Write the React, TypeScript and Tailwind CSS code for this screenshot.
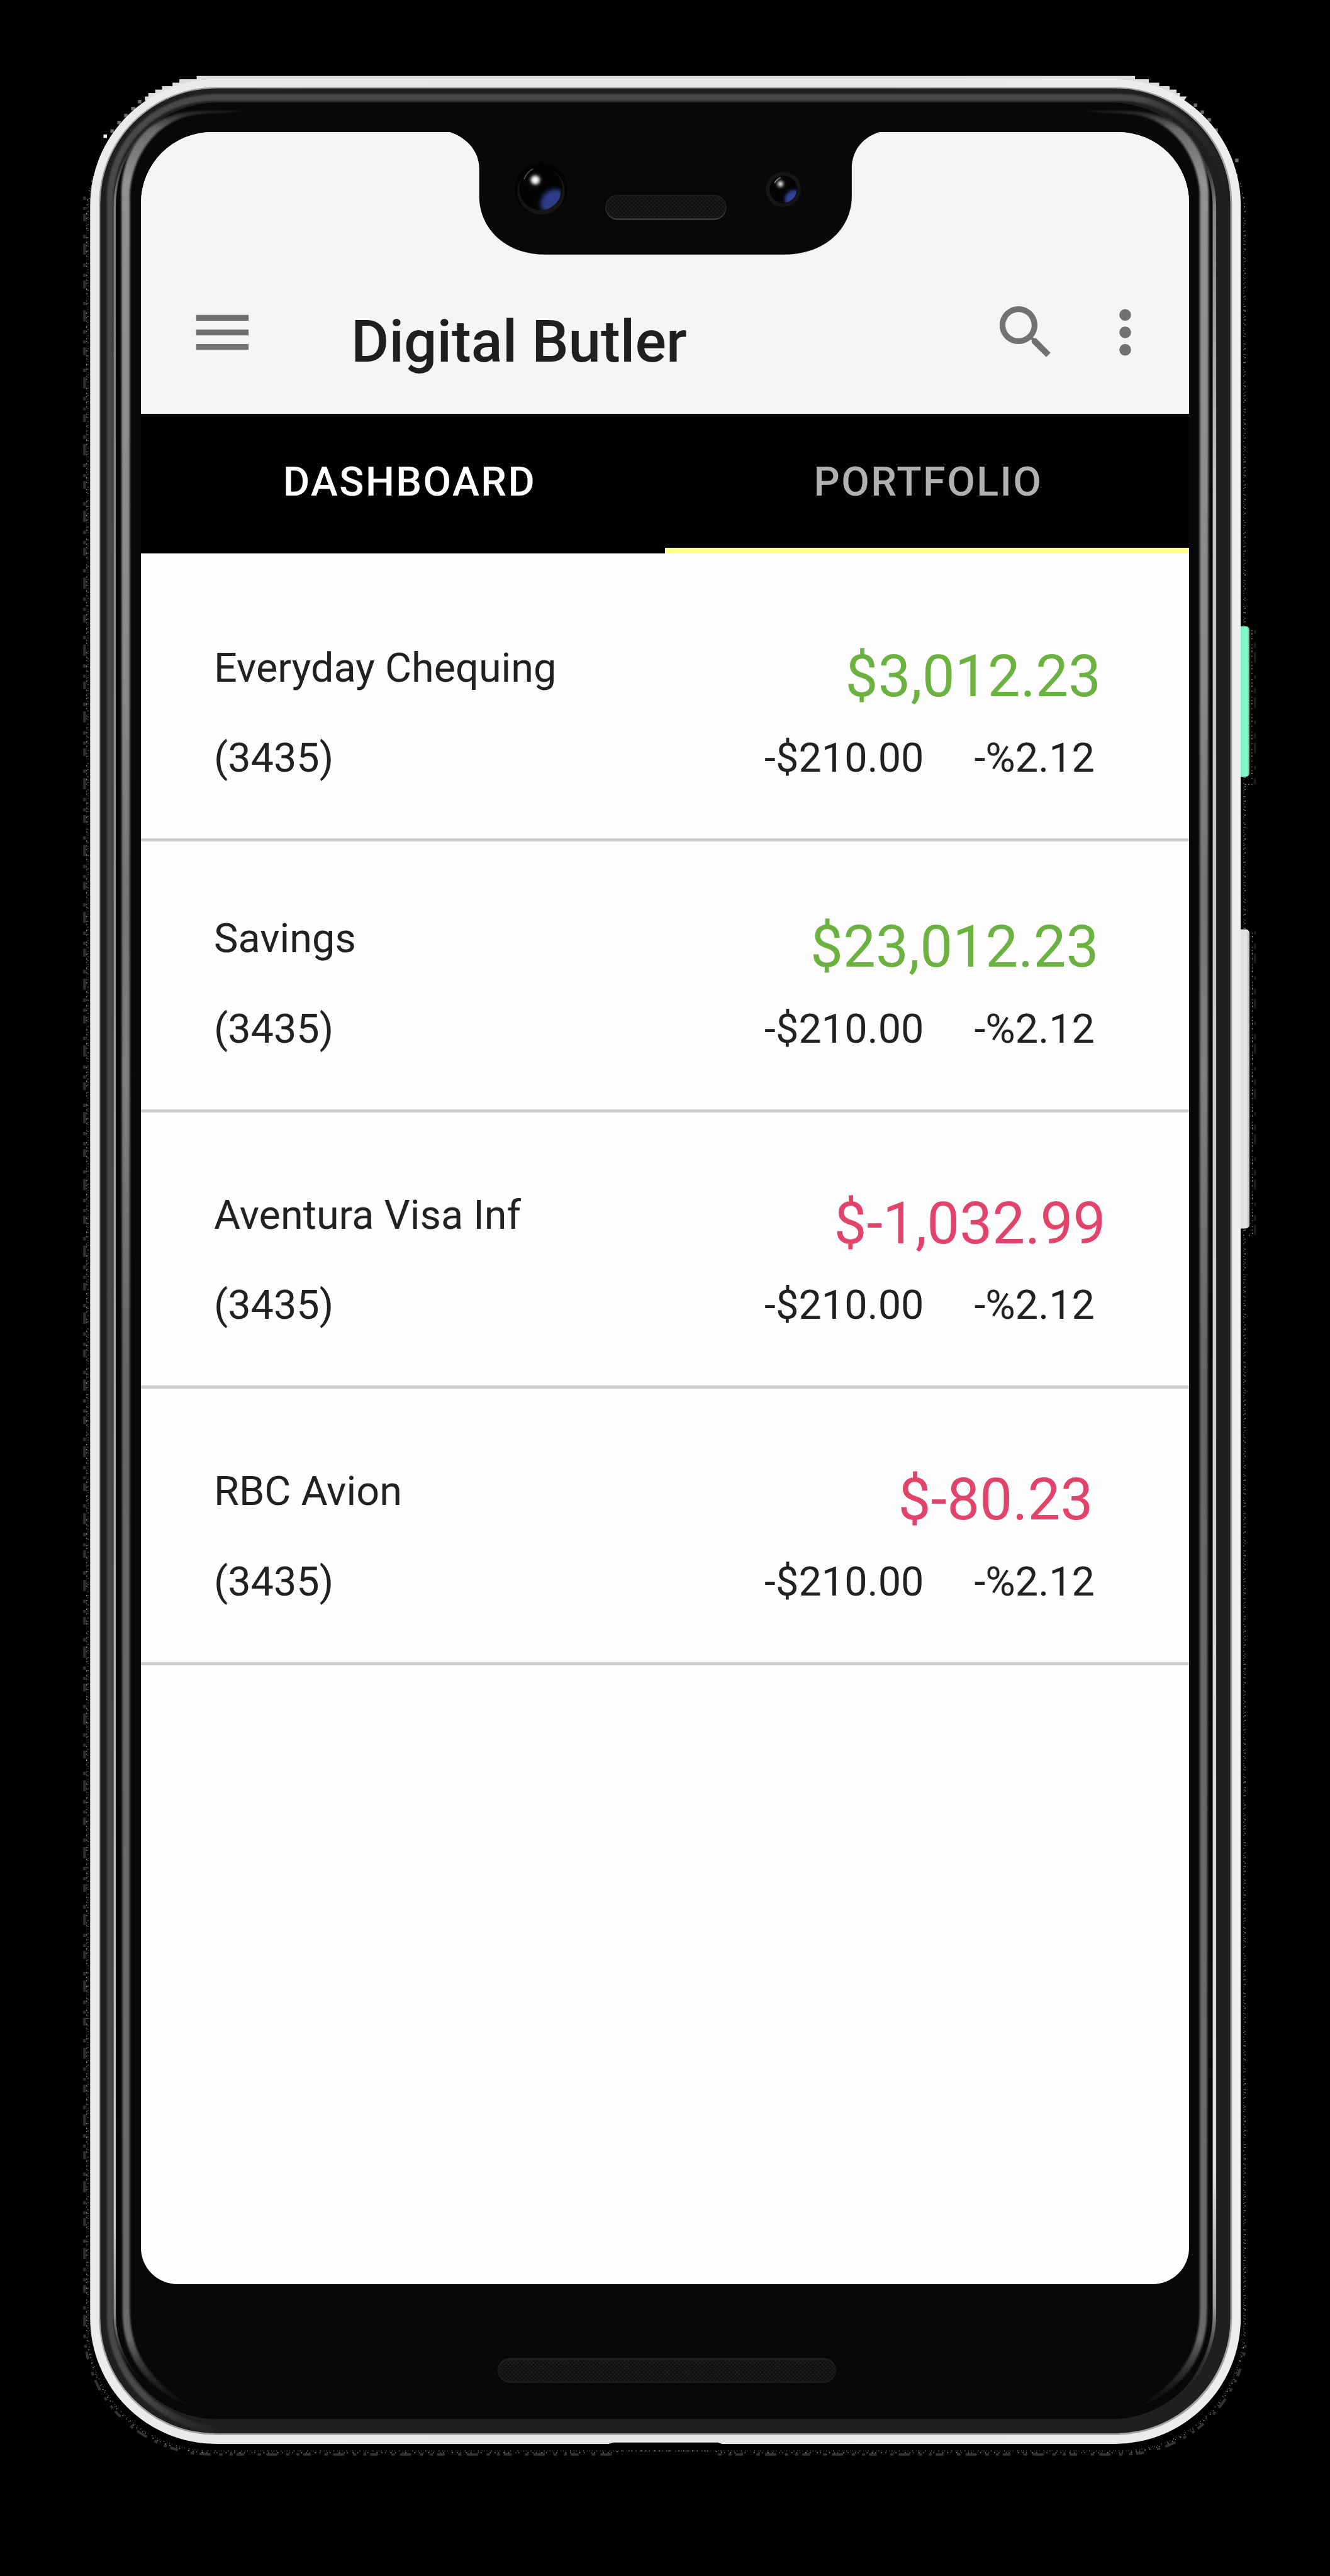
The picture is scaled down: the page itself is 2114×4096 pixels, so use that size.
import React from "react";

type Account = {
  name: string;
  number: string;
  amount: string;
  change: string;
  percent: string;
  amountClass: string;
  rowClass: string;
};

const accounts: Account[] = [
  {
    name: "Everyday Chequing",
    number: "(3435)",
    amount: "$3,012.23",
    change: "-$210.00",
    percent: "-%2.12",
    amountClass: "text-[#6cb240] mr-[140px]",
    rowClass: "h-[458px]",
  },
  {
    name: "Savings",
    number: "(3435)",
    amount: "$23,012.23",
    change: "-$210.00",
    percent: "-%2.12",
    amountClass: "text-[#6cb240] mr-[143.5px]",
    rowClass: "h-[430.5px]",
  },
  {
    name: "Aventura Visa Inf",
    number: "(3435)",
    amount: "$-1,032.99",
    change: "-$210.00",
    percent: "-%2.12",
    amountClass: "text-[#e1436b] mr-[132.5px]",
    rowClass: "h-[439.5px]",
  },
  {
    name: "RBC Avion",
    number: "(3435)",
    amount: "$-80.23",
    change: "-$210.00",
    percent: "-%2.12",
    amountClass: "text-[#e1436b] mr-[152.5px]",
    rowClass: "h-[439.5px]",
  },
];

function PhoneFrame() {
  const band =
    "M281 460 C281 340 345 257 470 257 L575 257 L470 264 C360 270 301 370 301 460 L301 5360 C301 5460 350 5525 445 5584 C330 5540 284 5460 284 5360 Z";
  return (
    <svg
      className="absolute inset-0 h-full w-full"
      viewBox="0 0 3084 5976"
      preserveAspectRatio="none"
      aria-hidden="true"
    >
      <defs>
        <filter id="soft" x="-5%" y="-5%" width="110%" height="110%">
          <feGaussianBlur stdDeviation="2.4" />
        </filter>
        <linearGradient id="rim" x1="0" y1="0" x2="1" y2="0">
          <stop offset="0" stopColor="#ebebeb" />
          <stop offset="0.5" stopColor="#e6e5e7" />
          <stop offset="1" stopColor="#eeecef" />
        </linearGradient>
        <linearGradient id="bevelTop" gradientUnits="userSpaceOnUse" x1="2640" y1="0" x2="2850" y2="0">
          <stop offset="0" stopColor="#494949" />
          <stop offset="1" stopColor="#333333" stopOpacity="0" />
        </linearGradient>
        <linearGradient id="bevelLeft" gradientUnits="userSpaceOnUse" x1="330" y1="0" x2="520" y2="0">
          <stop offset="0" stopColor="#494949" />
          <stop offset="1" stopColor="#333333" stopOpacity="0" />
        </linearGradient>
        <linearGradient id="bandFade" gradientUnits="userSpaceOnUse" x1="0" y1="256" x2="0" y2="5584">
          <stop offset="0" stopColor="#5a5a5a" stopOpacity="0.3" />
          <stop offset="0.008" stopColor="#6a6a6a" />
          <stop offset="0.03" stopColor="#929292" />
          <stop offset="0.25" stopColor="#8a8a8b" />
          <stop offset="0.34" stopColor="#747475" />
          <stop offset="0.42" stopColor="#808081" />
          <stop offset="0.55" stopColor="#666667" />
          <stop offset="0.92" stopColor="#6b6b6b" />
          <stop offset="0.97" stopColor="#6a6a6a" />
          <stop offset="1" stopColor="#222222" stopOpacity="0.2" />
        </linearGradient>
        <linearGradient id="lineLeft" gradientUnits="userSpaceOnUse" x1="0" y1="300" x2="0" y2="5530">
          <stop offset="0" stopColor="#333333" stopOpacity="0" />
          <stop offset="0.03" stopColor="#7d7d7d" />
          <stop offset="0.4" stopColor="#9a9a9a" />
          <stop offset="0.93" stopColor="#cfcfcf" />
          <stop offset="0.97" stopColor="#888888" />
          <stop offset="1" stopColor="#222222" stopOpacity="0" />
        </linearGradient>
        <linearGradient id="lineRight" gradientUnits="userSpaceOnUse" x1="0" y1="320" x2="0" y2="5560">
          <stop offset="0" stopColor="#333333" stopOpacity="0" />
          <stop offset="0.03" stopColor="#838383" />
          <stop offset="0.15" stopColor="#c4c2c5" />
          <stop offset="0.9" stopColor="#dddcde" />
          <stop offset="0.96" stopColor="#9d9c9e" />
          <stop offset="1" stopColor="#222222" stopOpacity="0" />
        </linearGradient>
        <linearGradient id="green" x1="0" y1="0" x2="1" y2="0">
          <stop offset="0" stopColor="#6fd3ad" />
          <stop offset="0.3" stopColor="#7df3c4" />
          <stop offset="0.8" stopColor="#82fbcb" />
          <stop offset="1" stopColor="#5cc79c" />
        </linearGradient>
      </defs>

      {/* speckled outline around the shell */}
      <path
        d="M225 390 Q201 440 201 500 V5400 A290 290 0 0 0 491 5690 H1415 L1440 5686 H1655 L1680 5690 H2597 A290 290 0 0 0 2887 5400 V500 Q2887 440 2862 390"
        fill="none"
        stroke="#b5b5b5"
        strokeWidth="1.8"
        strokeDasharray="2 6 1.5 11 3 8 2 15 1.5 5 2 19 2.5 9"
      />
      <path
        d="M236 355 Q204 440 204 500 V5400 A287 285 0 0 0 491 5686 H2597 A286 285 0 0 0 2884 5400 V500"
        fill="none"
        stroke="#5c5c5c"
        strokeWidth="3"
        strokeDasharray="1.5 5 1 9 2 7 1 4"
      />
      <path
        d="M196 456 V5410 A295 288 0 0 0 491 5694 H1425 M1665 5694 H2600 A290 288 0 0 0 2888 5440"
        fill="none"
        stroke="#333333"
        strokeWidth="6"
        strokeDasharray="8 16 7 9 18 31 8 12 26 20"
      />
      <path
        d="M2903 1462 V1820 H2880 M2904 2164 V2866 H2880"
        fill="none"
        stroke="#a0a0a0"
        strokeWidth="2"
        strokeDasharray="2 5 3 9 2 12 1.5 6"
      />
      <path
        d="M2910 1462 V1820 M2910 2160 V2866"
        fill="none"
        stroke="#1c1c1c"
        strokeWidth="5"
        strokeDasharray="8 20 14 9 24 30"
      />

      {/* stepped top edge */}
      <path
        d="M456 176 H2632 V184 H2664 V192 H2688 V200 H2712 V208 H2728 V216 H2736 V224 H2752 L2700 300 H400 L336 232 V224 H344 V216 H360 V208 H376 V200 H400 V192 H416 V184 H456 Z"
        fill="#dedede"
      />
      <path
        d="M320 232 h8 v8 h-8 Z M304 248 h10 v8 h-10 Z M288 264 h8 v8 h-8 Z M272 280 h8 v8 h-8 Z M256 300 h8 v8 h-8 Z M2768 240 h8 v8 h-8 Z M2784 256 h8 v8 h-8 Z M2800 274 h8 v8 h-8 Z M2816 298 h8 v8 h-8 Z M2864 368 h8 v8 h-8 Z"
        fill="#6b6b6b"
      />
      <rect x="240" y="312" width="8" height="8" fill="#ffffff" />

      {/* side buttons */}
      <path d="M2870 1453 H2888 Q2897 1453 2897 1461 V1794 Q2897 1802 2888 1802 H2870 Z" fill="url(#green)" />
      <path d="M2870 2156 H2890 Q2897 2158 2897 2164 V2842 Q2897 2850 2884 2850 H2870 Z" fill="#e2e1e3" />
      <path d="M2894.500 2162 V2844" stroke="#cbcacc" strokeWidth="4" />

      {/* metal rim, bevel and glass */}
      <rect x="209" y="184" width="2668" height="5485.500" rx="292" fill="url(#rim)" />
      <path d="M1410 5670 L1422 5666.500 H1665 L1675 5670 Z" fill="#000000" />
      <rect x="229.500" y="202" width="2627.500" height="5447" rx="271" fill="#a2a2a3" />
      <rect x="232.500" y="205" width="2620.500" height="5440" rx="268" fill="#1f1e20" />
      <g fill="none" strokeWidth="15" filter="url(#soft)">
        <path d="M255 3000 V470 C255 320 370 226 500 226 H2600 C2720 226 2838 330 2844 460" stroke="url(#bevelTop)" />
        <path d="M520 5641 C350 5620 255 5500 255 5370 V3000" stroke="url(#bevelLeft)" />
      </g>
      <rect x="267" y="238" width="2546" height="5374" rx="236" fill="#080709" />
      <path
        d="M355 290 C300 330 266 400 266 480 V5370 C266 5430 290 5490 345 5542"
        fill="none"
        stroke="url(#lineLeft)"
        strokeWidth="5"
      />
      <path
        d="M2735 310 C2790 355 2816 410 2816 480 V5370 C2816 5440 2785 5510 2725 5570"
        fill="none"
        stroke="url(#lineRight)"
        strokeWidth="8"
      />
      <g filter="url(#soft)">
        <path d={band} fill="url(#bandFade)" />
        <path d={band} fill="url(#bandFade)" transform="translate(3083 0) scale(-1 1)" />
      </g>
    </svg>
  );
}

function Mesh({ id }: { id: string }) {
  return (
    <pattern id={id} width="9" height="9" patternUnits="userSpaceOnUse">
      <rect width="9" height="9" fill="#111012" />
      <circle cx="2.300" cy="2.300" r="1.800" fill="#232224" />
      <circle cx="6.800" cy="6.800" r="1.800" fill="#232224" />
    </pattern>
  );
}

function Notch() {
  return (
    <svg
      className="absolute left-[492px] top-[-1px] h-[197px] w-[681px]"
      viewBox="1044.300 304.300 993.600 287.400"
      preserveAspectRatio="none"
      aria-hidden="true"
    >
      <defs>
        <Mesh id="earMesh" />
        <filter id="glow" x="-60%" y="-60%" width="220%" height="220%">
          <feGaussianBlur stdDeviation="3.500" />
        </filter>
        <filter id="haze" x="-60%" y="-60%" width="220%" height="220%">
          <feGaussianBlur stdDeviation="5" />
        </filter>
        <clipPath id="lensBig">
          <circle cx="1253.500" cy="439" r="48" />
        </clipPath>
        <clipPath id="lensSmall">
          <circle cx="1816.500" cy="439" r="31" />
        </clipPath>
      </defs>
      <path
        d="M1044 304 V306 C1075 316 1111 345 1111 390 V455 C1111 525 1167 590 1265 590 H1817 C1915 590 1975 528 1975 455 V390 C1975 345 2005 316 2038 306 V304 Z"
        fill="#080709"
      />
      <circle cx="1254.500" cy="438" r="61" fill="#020202" />
      <circle cx="1254.500" cy="443" r="55" fill="#151516" />
      <circle cx="1253.500" cy="437" r="50" fill="#040405" />
      <g clipPath="url(#lensBig)">
        <ellipse cx="1280" cy="465" rx="30" ry="23" fill="#2e3c88" transform="rotate(-45 1280 465)" filter="url(#haze)" />
      </g>
      <path d="M1215 415 Q1222 398 1236 391" fill="none" stroke="#4a4a4a" strokeWidth="3" />
      <circle cx="1241" cy="417" r="10.500" fill="#ffffff" filter="url(#glow)" />

      <circle cx="1816.500" cy="439" r="41" fill="#151516" />
      <circle cx="1816.500" cy="439" r="32" fill="#040405" />
      <g clipPath="url(#lensSmall)">
        <ellipse cx="1836" cy="457" rx="19" ry="14" fill="#33429a" transform="rotate(-45 1836 457)" filter="url(#glow)" />
      </g>
      <path d="M1796 424 Q1801 415 1810 411" fill="none" stroke="#777777" strokeWidth="2.500" />
      <circle cx="1809.500" cy="426" r="6.500" fill="#ffffff" filter="url(#glow)" />

      <rect x="1403.500" y="452" width="280.500" height="57.500" rx="28.700" fill="#3f3e40" />
      <rect x="1404" y="452" width="279.500" height="54.500" rx="27" fill="#1f1e20" />
      <rect x="1406" y="454" width="275.500" height="51.500" rx="25.500" fill="url(#earMesh)" />
    </svg>
  );
}

function MenuIcon() {
  return (
    <svg className="h-[111px] w-[111px]" viewBox="0 0 24 24" fill="#717171">
      <path d="M3 18h18v-2H3v2zm0-5h18v-2H3v2zm0-7v2h18V6H3z" />
    </svg>
  );
}

function SearchIcon() {
  return (
    <svg className="h-[111px] w-[111px]" viewBox="0 0 24 24" fill="#727173">
      <path d="M15.500 14h-.79l-.28-.27C15.410 12.590 16 11.110 16 9.500 16 5.910 13.090 3 9.500 3S3 5.910 3 9.500 5.910 16 9.500 16c1.610 0 3.090-.59 4.230-1.570l.27.28v.79l5 4.990L20.490 19l-4.990-5zm-6 0C7.010 14 5 11.990 5 9.500S7.010 5 9.500 5 14 7.010 14 9.500 11.990 14 9.500 14z" />
    </svg>
  );
}

function MoreIcon() {
  return (
    <svg className="h-[111px] w-[111px]" viewBox="0 0 24 24" fill="#727173">
      <path d="M12 8c1.100 0 2-.9 2-2s-.9-2-2-2-2 .9-2 2 .9 2 2 2zm0 2c-1.100 0-2 .9-2 2s.9 2 2 2 2-.9 2-2-.9-2-2-2zm0 6c-1.100 0-2 .9-2 2s.9 2 2 2 2-.9 2-2-.9-2-2-2z" />
    </svg>
  );
}

function AppBar() {
  return (
    <header className="flex h-[448px] items-start bg-gradient-to-b from-[#f5f5f5] from-25% to-[#f5f4f7] to-70% pl-[74px] pr-[46.5px] pt-[263px]">
      <MenuIcon />
      <h1 className="ml-[149px] mt-[24.5px] whitespace-nowrap text-[92.5px] font-medium leading-none text-[#1f1f20]">
        Digital Butler
      </h1>
      <div className="ml-auto flex gap-[46.5px]">
        <SearchIcon />
        <MoreIcon />
      </div>
    </header>
  );
}

function Tabs() {
  return (
    <nav className="grid h-[222px] grid-cols-2 bg-[#010002] text-[64.75px] font-medium leading-none tracking-[2.4px]">
      <div className="pl-[226px] pt-[76px] text-white">DASHBOARD</div>
      <div className="border-b-[9px] border-[#ffff8d] pl-[236.5px] pt-[76px] text-[#b1afb2]">PORTFOLIO</div>
    </nav>
  );
}

function AccountRow({ account }: { account: Account }) {
  return (
    <li
      className={`flex flex-col justify-end border-b-[5px] border-[#cfcecf] pb-[95px] pl-[116px] text-[64.75px] leading-none text-[#212022] ${account.rowClass}`}
    >
      <div className="flex items-start justify-between whitespace-nowrap">
        <span>{account.name}</span>
        <span className={`text-[92.5px] leading-none ${account.amountClass}`}>{account.amount}</span>
      </div>
      <div className="mt-[51px] flex whitespace-nowrap pr-[150px]">
        <span>{account.number}</span>
        <span className="ml-auto">{account.change}</span>
        <span className="ml-[80px]">{account.percent}</span>
      </div>
    </li>
  );
}

function BottomSpeaker() {
  return (
    <svg className="ml-[791px] mt-[117px] h-[40px] w-[538px]" viewBox="0 0 786 58" aria-hidden="true">
      <defs>
        <Mesh id="chinMesh" />
      </defs>
      <rect width="786" height="58" rx="29" fill="#1f1e20" />
      <rect x="2" y="5" width="782" height="50" rx="25" fill="url(#chinMesh)" />
    </svg>
  );
}

export default function App() {
  return (
    <div className="relative h-[4096px] w-[2114px] overflow-hidden bg-[#010001] font-['Roboto',sans-serif]">
      <PhoneFrame />
      <main className="relative pt-[210px]">
        <section className="relative ml-[224px] h-[3421.5px] w-[1666px] overflow-hidden rounded-b-[58px] rounded-t-[113px] bg-[#fefefe]">
          <AppBar />
          <Tabs />
          <ul>
            {accounts.map((account) => (
              <AccountRow key={account.name} account={account} />
            ))}
          </ul>
          <Notch />
        </section>
        <BottomSpeaker />
      </main>
    </div>
  );
}
